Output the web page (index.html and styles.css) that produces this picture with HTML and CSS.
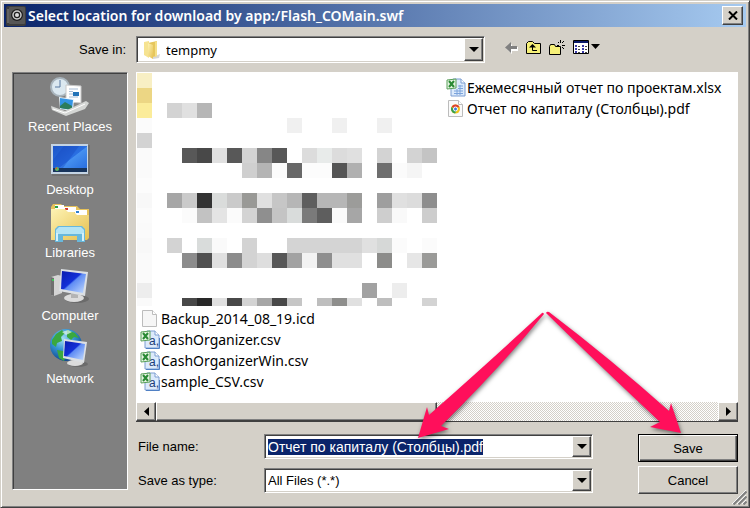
FILE: index.html
```html
<!DOCTYPE html>
<html lang="en">
<head>
  <meta charset="UTF-8">
  <title>Select location for download by app:/Flash_COMain.swf</title>
  <link rel="stylesheet" href="styles.css">
</head>
<body>
  <!-- Shared icons -->
  <svg class="defs" width="0" height="0" aria-hidden="true">
    <defs>
      <linearGradient id="screen" x1="0" y1="0" x2="1" y2="1">
        <stop offset="0" stop-color="#0a1cae"/>
        <stop offset="0.45" stop-color="#1230d8"/>
        <stop offset="0.5" stop-color="#5f8cf4"/>
        <stop offset="1" stop-color="#c4dcff"/>
      </linearGradient>
      <linearGradient id="desk" x1="0" y1="0" x2="1" y2="1">
        <stop offset="0" stop-color="#1c55c8"/>
        <stop offset="0.5" stop-color="#2a6fe2"/>
        <stop offset="0.52" stop-color="#4590f0"/>
        <stop offset="1" stop-color="#2468dc"/>
      </linearGradient>
      <linearGradient id="folder-fill" x1="0" y1="0" x2="1" y2="1">
        <stop offset="0" stop-color="#fdf3b4"/>
        <stop offset="1" stop-color="#e6c050"/>
      </linearGradient>
      <radialGradient id="globe" cx="0.4" cy="0.3" r="0.7">
        <stop offset="0" stop-color="#a4e0f4"/>
        <stop offset="0.5" stop-color="#3494d4"/>
        <stop offset="1" stop-color="#134a90"/>
      </radialGradient>
      <symbol id="i-csv" viewBox="0 0 20 19">
        <path d="M7 1h8l4 4v13H5V4z" fill="#dceafb" stroke="#7c9ed2"/>
        <path d="M15 1v4h4" fill="#fff" stroke="#7c9ed2"/>
        <path d="M6 18.500h13.500V8" fill="none" stroke="#5080c4"/>
        <text x="9" y="15" font-size="12" font-family="Liberation Sans" fill="#1c3c78">a,</text>
        <path d="M1 2l9-1v9l-9 1z" fill="#e6f4e2" stroke="#5aa05a"/>
        <path d="M3 3l5 6M8 3L3 9" stroke="#2a8a34" stroke-width="2"/>
      </symbol>
      <symbol id="i-xls" viewBox="0 0 20 19">
        <path d="M7 1h8l4 4v13H5V4z" fill="#dceafb" stroke="#7c9ed2"/>
        <path d="M15 1v4h4" fill="#fff" stroke="#7c9ed2"/>
        <path d="M12 8h5M12 10.500h5M8 13h9M8 15.500h9M11 11v6M14 7v10" stroke="#7ca4dc"/>
        <path d="M1 2l9-1v9l-9 1z" fill="#e6f4e2" stroke="#5aa05a"/>
        <path d="M3 3l5 6M8 3L3 9" stroke="#2a8a34" stroke-width="2"/>
      </symbol>
    </defs>
  </svg>

  <div class="window">
    <div class="titlebar">
      <svg class="app-icon" width="20" height="20" viewBox="0 0 20 20">
        <rect x="0" y="0" width="20" height="20" rx="2" fill="#3c3c3c"/>
        <rect x="3" y="1" width="16" height="17" rx="1" fill="#565656"/>
        <path d="M2 3v14" stroke="#888"/>
        <circle cx="11" cy="9" r="6" fill="#1e1e1e"/>
        <circle cx="11" cy="9" r="4" fill="none" stroke="#ccc" stroke-width="1.500"/>
        <circle cx="11" cy="9" r="2" fill="#ddd"/>
      </svg>
      <h1>Select location for download by app:/Flash_COMain.swf</h1>
      <button class="close" type="button" aria-label="Close">
        <svg width="10" height="9" viewBox="0 0 10 9"><path d="M1 0.500l8 8M9 0.500l-8 8" stroke="#000" stroke-width="2"/></svg>
      </button>
    </div>

    <div class="content">
      <label class="save-in" for="folder">Save in:</label>
      <div class="top">
        <div class="combo combo-folder">
          <select id="folder"><option>tempmy</option></select>
          <svg class="combo-icon" width="18" height="20" viewBox="0 0 18 20">
            <path d="M10 17l7-3-1 4-6 1z" fill="#bbb" opacity="0.6"/>
            <path d="M1 2l5-1v17l-5-3z" fill="#f6e391"/>
            <path d="M5 3l9-2v15l-4 1z" fill="#e6c65c"/>
            <path d="M5 3l5 2v14l-5-3z" fill="url(#folder-fill)"/>
            <path d="M12 2l2-1v15l-2 1z" fill="#f4df88"/>
          </svg>
          <span class="drop"></span>
        </div>
        <div class="toolbar">
          <button type="button" aria-label="Back">
            <svg width="14" height="12" viewBox="0 0 14 12">
              <path d="M7 2v3h6v4H7v3L1 6.500z" fill="#fff"/>
              <path d="M6 0v4h6v3H6v4L0 5.500z" fill="#808080"/>
            </svg>
          </button>
          <button type="button" aria-label="Up one level">
            <svg width="16" height="13" viewBox="0 0 16 13">
              <path d="M0.500 12.500v-10l2-2h4l2 2h6v10z" fill="#f6f078" stroke="#000"/>
              <path d="M6.500 4v5.500H11" fill="none" stroke="#000"/>
              <path d="M3 6.500L6.500 3 10 6.500z" fill="#000"/>
            </svg>
          </button>
          <button type="button" aria-label="New folder">
            <svg width="17" height="16" viewBox="0 0 17 16">
              <path d="M0.500 14.500v-8l1-2h4l1 2h5v8z" fill="#f6f078" stroke="#000"/>
              <path d="M11.500 0v3M11.500 7v3M8 5.500h2M13 5.500h3M9 2l1 1M15 1l-2 2M13 7l2 2" stroke="#000" fill="none"/>
            </svg>
          </button>
          <button type="button" aria-label="Views">
            <svg width="28" height="15" viewBox="0 0 28 15">
              <path d="M0.500 0.500h15v13h-15z" fill="#fff" stroke="#000"/>
              <path d="M1 1h14v2H1z" fill="#0a1a6a"/>
              <path d="M2 5h2v2H2zM2 8h2v2H2zM2 11h2v2H2zM9 5h2v2H9zM9 8h2v2H9zM9 11h2v2H9z" fill="#3a3aa8"/>
              <path d="M5 6.500h2M5 9.500h2M5 12.500h2M12 6.500h2M12 9.500h2M12 12.500h2" stroke="#444"/>
              <path d="M18 4h9l-4.500 5z" fill="#000"/>
            </svg>
          </button>
        </div>
      </div>

      <nav class="places">
        <button type="button">
          <svg width="40" height="40" viewBox="0 0 40 40">
            <path d="M1 29l7 4 28-8 3 3-21 11H14L1 33z" fill="#888"/>
            <circle cx="10" cy="11" r="9" fill="#dbe8f0" stroke="#a8b4bc" stroke-width="2"/>
            <path d="M10 4v7H5" fill="none" stroke="#5878a0"/>
            <path d="M16 9l15 1v17l-15-1z" fill="#fff" stroke="#c8c8c8"/>
            <path d="M19 13h9M19 15.500h4M19 18h4M19 21h9" stroke="#a8bcd4"/>
            <path d="M23 16h6v4h-6z" fill="#2474b8"/>
            <path d="M9 21l15 2-1 12-13-2z" fill="#e8f4fc"/>
            <path d="M10 22l13 2-1 10-12-2z" fill="#3494e4"/>
            <path d="M10 30l5-4 7 4v4l-12-2z" fill="#2c7c5c"/>
            <path d="M1 30l14 5 21-10 3 2-4 6-19 7-14-6z" fill="#d4d6d4"/>
            <path d="M3 33l12 4 20-9" fill="none" stroke="#fff"/>
          </svg>
          <span>Recent Places</span>
        </button>
        <button type="button">
          <svg width="40" height="40" viewBox="0 0 40 40">
            <rect x="2" y="6" width="38" height="31" fill="#606060" opacity="0.5"/>
            <rect x="1" y="5" width="37" height="30" fill="#c4d4e4"/>
            <rect x="3" y="7" width="34" height="26" fill="url(#desk)"/>
            <path d="M3 29h34v4H3z" fill="#17345c"/>
            <path d="M14 7h15L13 29H3v-8z" fill="#1648c0" opacity="0.4"/>
            <circle cx="7" cy="30" r="2" fill="#60b460"/>
            <path d="M5 30h2v-2z" fill="#e05030"/>
          </svg>
          <span>Desktop</span>
        </button>
        <button type="button">
          <svg width="40" height="40" viewBox="0 0 40 40">
            <path d="M1 5l2-3h8l2 2h14l3 3h9v28H1z" fill="#e6c25a"/>
            <path d="M5 3h9v5H5zM14 5h12v5H14zM25 8h12v5H25z" fill="#fff"/>
            <path d="M5 4h3v2H5z" fill="#28a048"/>
            <path d="M15 6h3v2h-3z" fill="#d43c30"/>
            <path d="M26 9h3v2h-3z" fill="#3080d0"/>
            <path d="M1 7h14l3 3h6l3 3h12v23l-2 2H1z" fill="url(#folder-fill)"/>
            <path d="M5 40V27l3-3h24l3 3v13h-8v-6H13v6z" fill="#68b8dc"/>
            <path d="M6 28l3-3h22l3 3v4H6z" fill="#b4e4f4"/>
            <path d="M7 31v8M33 31v8" stroke="#d4f0fa" stroke-width="2"/>
          </svg>
          <span>Libraries</span>
        </button>
        <button type="button">
          <svg width="40" height="40" viewBox="0 0 40 40">
            <path d="M1 12l7-2 4 1v17l-8 3-3-1z" fill="#d4d4d4"/>
            <path d="M1 12l3 1v18l-3-1z" fill="#707070"/>
            <circle cx="3" cy="15" r="1" fill="#30e050"/>
            <ellipse cx="27" cy="34" rx="12" ry="4" fill="#555" opacity="0.5"/>
            <ellipse cx="24" cy="33" rx="10" ry="4" fill="#dcdcdc"/>
            <path d="M21 27h7v6h-7z" fill="#b4b4b4"/>
            <path d="M11 4l27 3-3 24-26-5z" fill="#dce0e4"/>
            <path d="M12 6l24 3-3 19-22-4z" fill="url(#screen)"/>
          </svg>
          <span>Computer</span>
        </button>
        <button type="button">
          <svg width="40" height="40" viewBox="0 0 40 40">
            <circle cx="16" cy="17" r="16" fill="url(#globe)"/>
            <path d="M2 12l4-6 6-4 3 3-4 4 1 4-5 2-1 4-4-3zM17 2l8 3 4 5-5-1-3 3-4-3zM7 22l6 1 3 4-2 6-5-3z" fill="#3aa840"/>
            <path d="M12 4l6-2 4 2-6 3z" fill="#e4f8f0" opacity="0.7"/>
            <ellipse cx="28" cy="36" rx="10" ry="3" fill="#555" opacity="0.5"/>
            <ellipse cx="25" cy="35" rx="8" ry="3" fill="#dcdcdc"/>
            <path d="M14 11l23 3-3 21-21-5z" fill="#dce0e4"/>
            <path d="M15 13l20 3-2 16-19-4z" fill="url(#screen)"/>
          </svg>
          <span>Network</span>
        </button>
      </nav>

      <div class="main">
        <div class="list">
          <div class="files">
            <div class="column">
              <div class="mosaic" id="mosaic"></div>
              <ul>
                <li>
                  <svg width="20" height="19" viewBox="0 0 20 19">
                    <path d="M2.500 1.500h10l4 4v12h-14z" fill="#f6f6f6" stroke="#bcbcbc"/>
                    <path d="M12.500 1.500v4h4" fill="#fff" stroke="#bcbcbc"/>
                  </svg>
                  <span>Backup_2014_08_19.icd</span>
                </li>
                <li><svg width="20" height="19"><use href="#i-csv"/></svg><span>CashOrganizer.csv</span></li>
                <li><svg width="20" height="19"><use href="#i-csv"/></svg><span>CashOrganizerWin.csv</span></li>
                <li><svg width="20" height="19"><use href="#i-csv"/></svg><span>sample_CSV.csv</span></li>
              </ul>
            </div>
            <div class="column column-right">
              <ul>
                <li><svg width="20" height="19"><use href="#i-xls"/></svg><span>Ежемесячный отчет по проектам.xlsx</span></li>
                <li>
                  <svg width="20" height="19" viewBox="0 0 20 19">
                    <path d="M2.500 1.500h10l4 4v12h-14z" fill="#fafafa" stroke="#bcbcbc"/>
                    <path d="M12.500 1.500v4h4" fill="#fff" stroke="#bcbcbc"/>
                    <circle cx="9.500" cy="10" r="4.500" fill="#f2c318"/>
                    <path d="M5.600 7.700A4.500 4.500 0 0 1 13.700 8.200H9.500V10z" fill="#dd4030"/>
                    <path d="M5.600 7.700A4.500 4.500 0 0 0 9 14.500L11 11 8 11z" fill="#36a04c"/>
                    <circle cx="9.500" cy="10" r="2" fill="#3c7cdc" stroke="#fff"/>
                  </svg>
                  <span>Отчет по капиталу (Столбцы).pdf</span>
                </li>
              </ul>
            </div>
          </div>
          <div class="scrollbar">
            <button type="button" aria-label="Scroll left"><svg width="5" height="9" viewBox="0 0 5 9"><path d="M5 0v9L0 4.500z"/></svg></button>
            <div class="track"><div class="thumb"></div></div>
            <button type="button" aria-label="Scroll right"><svg width="5" height="9" viewBox="0 0 5 9"><path d="M0 0v9l5-4.500z"/></svg></button>
          </div>
        </div>

        <form class="bottom">
          <div class="fields">
            <label for="filename">File name:</label>
            <div class="combo">
              <input id="filename" type="text" value="Отчет по капиталу (Столбцы).pdf" autocomplete="off" spellcheck="false">
              <button class="drop" type="button" aria-label="Recent names"></button>
            </div>
            <label for="filetype">Save as type:</label>
            <div class="combo">
              <select id="filetype"><option>All Files (*.*)</option></select>
              <span class="drop"></span>
            </div>
          </div>
          <div class="actions">
            <button class="btn btn-default" type="button">Save</button>
            <button class="btn" type="button">Cancel</button>
          </div>
        </form>
      </div>
    </div>

    <svg class="grip" width="16" height="16" viewBox="0 0 16 16">
      <path d="M1 15L15 1M6 15l9-9M11 15l4-4" stroke="#fff"/>
      <path d="M2.500 15.500l13-13M7.500 15.500l8-8M12.500 15.500l3-3" stroke="#808080" stroke-width="2"/>
    </svg>

    <svg class="pointers" viewBox="0 0 750 508" aria-hidden="true">
      <path d="M542 313Q543 312 544 314Q500 368 441 426L449 429 418 438 427 407 429 415Q489 362 542 313z"/>
      <path d="M546 313Q547 311 549 312Q612 360 669 411L671 403 681 433 650 427 660 422Q598 364 546 313z"/>
    </svg>
  </div>

  <script src="script.js"></script>
</body>
</html>
```
FILE: styles.css
```css
* {
  box-sizing: border-box;
}

body {
  margin: 0;
  font-family: "Liberation Sans", Arial, sans-serif;
  font-size: 13px;
  color: #000;
  background-color: #d4d0c8;
}

button, input, select {
  font: inherit;
  color: inherit;
}

button {
  padding: 0;
  border: none;
  background: none;
}

ul {
  list-style: none;
  margin: 0;
  padding: 0;
}

.defs {
  position: absolute;
}

.window {
  position: relative;
  display: flex;
  flex-direction: column;
  min-height: 100vh;
  padding: 3px;
  border: 1px solid;
  border-color: #d4d0c8 #404040 #404040 #d4d0c8;
  box-shadow: inset 1px 1px #fff, inset -1px -1px #808080;
}

/* Title bar */
.titlebar {
  display: flex;
  align-items: center;
  height: 23px;
  padding: 0 3px 0 2px;
  background: linear-gradient(to right, #0a246a, #a6caf0);
}

.titlebar h1 {
  flex: 1;
  margin: 0 0 0 2px;
  font-family: "Noto Sans", sans-serif;
  font-size: 14px;
  font-weight: 600;
  line-height: 20px;
  color: #fff;
}

.close,
.scrollbar button,
.thumb,
.drop,
.btn {
  display: flex;
  align-items: center;
  justify-content: center;
  background-color: #d4d0c8;
  border: 1px solid;
  border-color: #fff #404040 #404040 #fff;
  box-shadow: inset -1px -1px #808080;
}

.close {
  width: 21px;
  height: 19px;
}

/* Layout */
.content {
  flex: 1;
  display: grid;
  grid-template-columns: 116px 1fr;
  grid-template-rows: auto 1fr;
  gap: 9px 8px;
  padding: 9px 8px 10px;
}

.save-in {
  align-self: center;
  padding-right: 2px;
  text-align: right;
}

.top {
  display: flex;
  align-items: center;
}

.toolbar {
  display: flex;
  align-items: center;
  gap: 7px;
  margin: 0 0 4px 20px;
}

.toolbar button {
  display: flex;
}

/* Combo boxes */
.combo {
  display: grid;
  height: 25px;
  padding: 1px;
  border: 1px solid;
  border-color: #808080 #fff #fff #808080;
  background-color: #fff;
  box-shadow: inset 1px 1px #404040, inset -1px -1px #d4d0c8;
}

.combo > * {
  grid-area: 1 / 1;
}

.combo input,
.combo select {
  width: 100%;
  min-width: 0;
  padding: 0 20px 0 2px;
  border: none;
  outline: none;
  appearance: none;
  background: none;
}

.combo input {
  font-size: 14px;
}

.combo input::selection {
  color: #fff;
  background-color: #0a246a;
}

.drop {
  justify-self: end;
  width: 19px;
}

span.drop {
  pointer-events: none;
}

.drop::after {
  content: "";
  border: 5px solid transparent;
  border-top-color: #000;
  border-bottom: none;
}

.combo-folder {
  width: 58%;
  height: 27px;
}

.combo-folder select {
  padding-left: 28px;
  font-family: "Noto Sans", sans-serif;
}

.combo-icon {
  align-self: center;
  margin-left: 5px;
  pointer-events: none;
}

/* Places bar */
.places {
  display: flex;
  flex-direction: column;
  gap: 3px;
  margin-bottom: 4px;
  padding: 3px 1px 1px;
  border: 1px solid;
  border-color: #808080 #fff #fff #808080;
  background-color: #808080;
  box-shadow: inset 1px 1px #404040;
  color: #fff;
}

.places button {
  display: flex;
  flex-direction: column;
  align-items: center;
  gap: 2px;
  line-height: 18px;
}

/* File list */
.main {
  display: flex;
  flex-direction: column;
  gap: 12px;
}

.list {
  flex: 1;
  display: flex;
  flex-direction: column;
  background-color: #fff;
  border-bottom: 1px solid #404040;
}

.files {
  flex: 1;
  display: flex;
  gap: 9px;
  padding: 1px;
  font-family: "Noto Sans", sans-serif;
  font-size: 14px;
}

.files li {
  display: flex;
  align-items: center;
  gap: 1px;
  height: 21px;
  padding-left: 3px;
  white-space: nowrap;
}

.column-right {
  padding-top: 4px;
}

.column-right li {
  padding-left: 0;
}

.mosaic {
  display: grid;
  grid-template-columns: repeat(20, 15px);
  grid-auto-rows: 15px;
  height: 233px;
  margin-bottom: 2px;
  overflow: hidden;
}

.scrollbar {
  display: flex;
  height: 19px;
}

.scrollbar button {
  width: 20px;
}

.track {
  flex: 1;
  display: flex;
  background: repeating-conic-gradient(#fff 0 25%, #d4d0c8 0 50%) 0 0 / 2px 2px;
}

.thumb {
  width: 50%;
}

/* Bottom form */
.bottom {
  display: flex;
  justify-content: space-between;
  gap: 45px;
}

.fields {
  flex: 1;
  display: grid;
  grid-template-columns: 126px 1fr;
  grid-auto-rows: 25px;
  row-gap: 9px;
  align-items: center;
  padding-left: 2px;
}

.actions {
  display: flex;
  flex-direction: column;
  gap: 4px;
  width: 100px;
}

.btn {
  height: 28px;
}

.btn-default {
  border-color: #000;
  box-shadow: inset 1px 1px #fff, inset -1px -1px #404040, inset -2px -2px #808080;
}

.grip {
  position: absolute;
  right: 2px;
  bottom: 2px;
}

/* Arrows drawn over the dialog */
.pointers {
  position: absolute;
  top: -1px;
  left: -1px;
  width: 100vw;
  pointer-events: none;
  fill: #ff0f5b;
  filter: drop-shadow(1px 2px 2px rgba(0, 0, 0, 0.5));
}
```
FILE: script.js
```js
// One entry per row, one colour per cell, "-" leaves the cell empty
const rows = [
  'f8efc4',
  'ecd684',
  'fbec9a - d3d3d3 e0e0e0 b6b6b6',
  'fbfbfb - - - - - - - - - f0f0f0 - - f0f0f0 - - f0f0f0',
  'd3d3d3',
  'fafafa - - 585858 484848 e0e0e0 585858 d3d3d3 868686 585858 - dcdcdc e8ebea dcdcdc e0e0e0 - d3d3d3 - d3d3d3 c4c4c4',
  'fafafa - - - - - - cfcfcf b4b4b4 fbfbfb 686868 fcfcfc fcfcfc 555555 b0b0b0 - 6e6e6e fbfbfb f5f5f5',
  'fcfcfc',
  'f8f8f8 - a6a6a6 cacaca 333333 dadcdb cacaca 999996 e0e0e0 c6c6c6 b6b6b6 5e5e5e b6b6b6 b6b6b6 9c9c9a - 9e9e9e e0e0e0 dcdcdc 8e8e8e',
  'fbfbfb - - fbfbfb c2c2c2 e4e4e4 fbfbfb d3d3d3 8f8f8f c4c4c4 d9dcdb 7a7a7a 5e5e5e fafafa a6a6a6 - cecece f9f9f9 - cdcdcd',
  'fafafa',
  'f8f8f8 - d3d3d3 - d9dcdb fafafa - d3d3d3 - - d4d4d4 d4d4d4 d4d4d4 d4d4d4 d4d4d4 e0e0e0 d6d8d7 fbfbfb - fbfbfb',
  'fafafa - - 8c8c8c 505050 e0e0e0 8c8c8c d3d3d3 dedede 575757 a2a2a2 f2f2f2 8e8e8e e0e0e0 e0e0e0 - 8c8c8a - e6e6e6 9a9a98',
  'fafafa',
  'ededed - - - - - - - - - - - - - - a2a2a2 - ededed',
  'fafafa - - 484848 282828 e0e0e0 484848 d3d3d3 a6a6a6 484848 c6c6c6 - bebebe 8e8e8c e0e0e0 - bebebe - - d3d3d3'
];

const mosaic = document.getElementById('mosaic');
rows.forEach(row => {
  const colors = row.split(' ');
  for (let i = 0; i < 20; i++) {
    const cell = document.createElement('span');
    if (colors[i] && colors[i] !== '-') {
      cell.style.backgroundColor = '#' + colors[i];
    }
    mosaic.appendChild(cell);
  }
});

// The suggested name is selected when the dialog opens
const filename = document.getElementById('filename');
filename.focus();
filename.select();
```
